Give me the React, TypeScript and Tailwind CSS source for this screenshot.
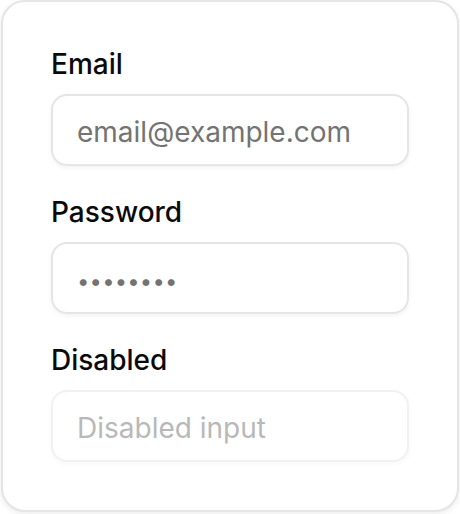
export default function App() {
  return (
    <div className="min-h-screen bg-white" style={{ fontFamily: "Inter, 'Noto Sans', sans-serif" }}>
      <div className="ml-px flex w-[458px] flex-col gap-[32px] rounded-[24px] border-2 border-[#e5e5e5] bg-white p-[48px] shadow-[0_2px_6px_rgba(0,0,0,0.08)]">
        <Field label="Email" placeholder="email@example.com" />
        <Field label="Password" placeholder="••••••••" small />
        <Field label="Disabled" placeholder="Disabled input" disabled />
      </div>
    </div>
  )
}

function Field({
  label,
  placeholder,
  small = false,
  disabled = false,
}: {
  label: string
  placeholder: string
  small?: boolean
  disabled?: boolean
}) {
  return (
    <div className="flex flex-col gap-[16px]">
      <label className="text-[28px] font-medium leading-none text-[#0a0a0a]">{label}</label>
      <input
        type="text"
        placeholder={placeholder}
        disabled={disabled}
        className={`h-[72px] w-full rounded-[16px] border-2 border-[#e5e5e5] bg-transparent px-[24px] text-[#0a0a0a] shadow-[0_2px_4px_rgba(0,0,0,0.05)] outline-none placeholder:text-[#737373] disabled:opacity-50 ${
          small ? "pt-[6px] text-[22px] tracking-[0.2px]" : "pt-[3px] text-[28px]"
        }`}
      />
    </div>
  )
}
